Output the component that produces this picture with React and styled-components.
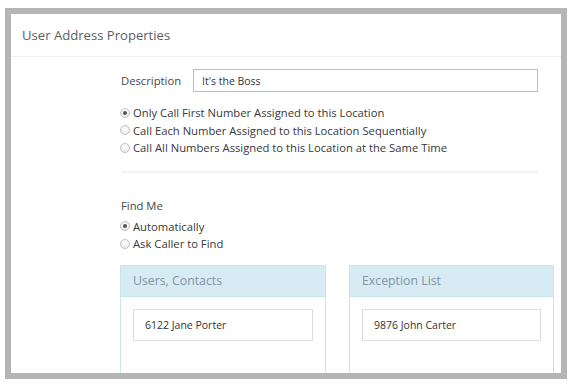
import React from 'react';
import styled, { createGlobalStyle } from 'styled-components';

const GlobalStyle = createGlobalStyle`
  html, body {
    margin: 0;
    padding: 0;
    background: #ffffff;
    font-family: 'Open Sans', 'Noto Sans', sans-serif;
  }
  * {
    box-sizing: border-box;
  }
`;

const Frame = styled.div`
  margin: 8px 0 0 5px;
  width: 562px;
  height: 371px;
  border: 6px solid #b5b5b5;
  background: #ffffff;
  overflow: hidden;
`;

const Header = styled.div`
  height: 43px;
  display: flex;
  align-items: center;
  padding-left: 11px;
  border-bottom: 1px solid #f0f0f0;
`;

const Title = styled.h1`
  margin: 0;
  font-size: 13.1px;
  font-weight: 400;
  color: #5e5e5e;
`;

const Content = styled.div`
  padding: 12px 23px 0 109px;
`;

const FieldRow = styled.div`
  display: flex;
  align-items: center;
  height: 23px;
`;

const Label = styled.label`
  width: 73px;
  padding-left: 1px;
  font-size: 11.25px;
  color: #474747;
`;

const TextInput = styled.div`
  flex: 1;
  height: 23px;
  border: 1px solid #bdbdbd;
  padding-left: 8px;
  display: flex;
  align-items: center;
  font-size: 10.5px;
  color: #333;
`;

const RadioGroup = styled.div`
  display: flex;
  flex-direction: column;
  margin-top: ${({ $top }) => $top}px;
`;

const RadioRow = styled.div`
  display: flex;
  align-items: center;
  height: 17.5px;
  font-size: 11.25px;
  color: #383838;
`;

const RadioDot = styled.span`
  width: 10px;
  height: 10px;
  border-radius: 50%;
  border: 1px solid #c4c4c4;
  background: radial-gradient(circle at 50% 35%, #ffffff 0%, #e3e3e3 100%);
  margin-right: 3px;
  display: flex;
  align-items: center;
  justify-content: center;

  &::after {
    content: '';
    width: 4px;
    height: 4px;
    border-radius: 50%;
    background: ${({ $checked }) => ($checked ? '#555' : 'transparent')};
  }
`;

const Divider = styled.div`
  height: 2px;
  background: #f4f4f4;
  margin: 14px 0 0 1px;
`;

const SectionLabel = styled.div`
  margin-top: 24px;
  height: 17px;
  display: flex;
  align-items: center;
  padding-left: 1px;
  font-size: 11.25px;
  color: #474747;
`;

const Panels = styled.div`
  display: flex;
  gap: 23px;
  width: 434px;
  margin-top: 12px;
`;

const Panel = styled.div`
  width: ${({ $w }) => $w}px;
  height: 140px;
  border: 1px solid #c9e6ef;
`;

const PanelHeader = styled.div`
  height: 31px;
  background: #d6ebf4;
  border-bottom: 1px solid #c9e6ef;
  display: flex;
  align-items: center;
  padding-left: 12px;
  font-size: 12.3px;
  color: #8294a0;
`;

const PanelBody = styled.div`
  padding: 12px 12px;
`;

const Entry = styled.div`
  height: 32px;
  border: 1px solid #dedede;
  display: flex;
  align-items: center;
  padding-left: 11px;
  font-size: 10.5px;
  color: #333;
`;

const Radio = ({ checked, children }) => (
  <RadioRow>
    <RadioDot $checked={checked} />
    {children}
  </RadioRow>
);

export default function App() {
  return (
    <>
      <GlobalStyle />
      <Frame>
        <Header>
          <Title>User Address Properties</Title>
        </Header>
        <Content>
          <FieldRow>
            <Label>Description</Label>
            <TextInput>It's the Boss</TextInput>
          </FieldRow>
          <RadioGroup $top={12}>
            <Radio checked>Only Call First Number Assigned to this Location</Radio>
            <Radio>Call Each Number Assigned to this Location Sequentially</Radio>
            <Radio>Call All Numbers Assigned to this Location at the Same Time</Radio>
          </RadioGroup>
          <Divider />
          <SectionLabel>Find Me</SectionLabel>
          <RadioGroup $top={4}>
            <Radio checked>Automatically</Radio>
            <Radio>Ask Caller to Find</Radio>
          </RadioGroup>
          <Panels>
            <Panel $w={206}>
              <PanelHeader>Users, Contacts</PanelHeader>
              <PanelBody>
                <Entry>6122 Jane Porter</Entry>
              </PanelBody>
            </Panel>
            <Panel $w={205}>
              <PanelHeader>Exception List</PanelHeader>
              <PanelBody>
                <Entry>9876 John Carter</Entry>
              </PanelBody>
            </Panel>
          </Panels>
        </Content>
      </Frame>
    </>
  );
}
